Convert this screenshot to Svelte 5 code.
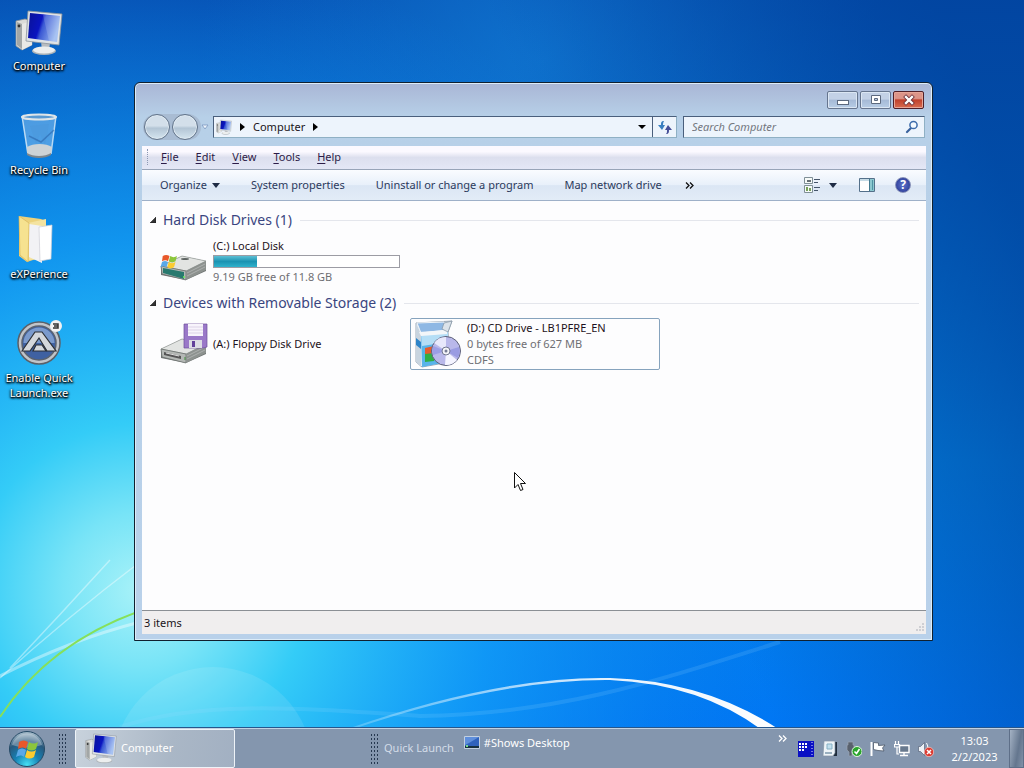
<script lang="ts">
  interface Drive {
    name: string;
    icon: 'hdd' | 'floppy' | 'cd';
    used?: number;
    lines: string[];
    selected?: boolean;
  }

  interface Group {
    title: string;
    drives: Drive[];
  }

  const shortcuts = [
    { icon: 'computer', label: 'Computer' },
    { icon: 'bin', label: 'Recycle Bin' },
    { icon: 'folder', label: 'eXPerience' },
    { icon: 'autoit', label: 'Enable Quick Launch.exe' },
  ];

  const menus = ['File', 'Edit', 'View', 'Tools', 'Help'];
  const commands = ['System properties', 'Uninstall or change a program', 'Map network drive'];

  const groups: Group[] = [
    {
      title: 'Hard Disk Drives (1)',
      drives: [
        { name: '(C:) Local Disk', icon: 'hdd', used: 23, lines: ['9.19 GB free of 11.8 GB'] },
      ],
    },
    {
      title: 'Devices with Removable Storage (2)',
      drives: [
        { name: '(A:) Floppy Disk Drive', icon: 'floppy', lines: [] },
        {
          name: '(D:) CD Drive - LB1PFRE_EN',
          icon: 'cd',
          lines: ['0 bytes free of 627 MB', 'CDFS'],
          selected: true,
        },
      ],
    },
  ];

  let query = $state('');
  let collapsed = $state<Record<string, boolean>>({});
  let count = $derived(groups.reduce((n, g) => n + g.drives.length, 0));
</script>

{#snippet flag()}
  <path d="M1 4C4 2 7 2 10 4L8 11C6 9 3 9 0 11Z" fill="#e8582a" />
  <path d="M11 4C14 6 17 6 20 4L18 11C15 13 12 13 9 11Z" fill="#8cc63c" />
  <path d="M0 12C3 10 5 10 8 12L6 19C4 17 1 17-2 19Z" fill="#5aa8e8" />
  <path d="M9 12C12 14 15 14 18 12L16 19C13 21 10 21 7 19Z" fill="#fccb30" />
{/snippet}

{#snippet computer(size: number)}
  <svg width={size} height={size} viewBox="0 0 48 48" aria-hidden="true">
    <defs>
      <linearGradient id="screen" x1="0" y1="0" x2="1" y2="0.3">
        <stop offset="0" stop-color="#0a1296" />
        <stop offset="0.45" stop-color="#0a14c0" />
        <stop offset="0.55" stop-color="#3a58d4" />
        <stop offset="1" stop-color="#98b8f0" />
      </linearGradient>
    </defs>
    <path d="M1 13L10 11L17 13V37L7 42L1 38Z" fill="#dcdcd8" stroke="#8e9294" stroke-width="0.8" />
    <path d="M7 16L17 13V37L7 42Z" fill="#e9e9e6" />
    <path d="M2 14L7 16V41L2 37Z" fill="#a2a6a6" />
    <circle cx="4" cy="18" r="1.4" fill="#333" />
    <path d="M26 33L35 35L34 43H27Z" fill="#b8bcc0" />
    <ellipse cx="29" cy="43" rx="12" ry="4" fill="#aeb4b8" />
    <ellipse cx="29" cy="42" rx="11" ry="3.5" fill="#eceeee" />
    <path d="M13 3L47 6L44 37L11 33Z" fill="#dfe3e6" stroke="#8c949c" stroke-width="0.8" />
    <path d="M15 5L45 8L42 34L13 30Z" fill="url(#screen)" />
    <path d="M28 7L45 8L42 34L34 33Z" fill="#fff" opacity="0.15" />
  </svg>
{/snippet}

{#snippet shortcutIcon(icon: string)}
  {#if icon === 'computer'}
    {@render computer(48)}
  {:else if icon === 'bin'}
    <svg width="48" height="48" viewBox="0 0 48 48" aria-hidden="true">
      <path d="M7 4L41 4L36 42C31 46 17 46 12 42Z" fill="#8fc3f0" opacity="0.5" />
      <path d="M7 4L13 42M41 4L36 42" stroke="#d8ecfa" stroke-width="1.5" opacity="0.8" />
      <path d="M15 14L21 32L25 22L30 33L34 12Z" fill="#4b94d8" opacity="0.35" />
      <path d="M14 24L26 30L39 18" stroke="#2b66ac" stroke-width="1.5" fill="none" opacity="0.6" />
      <path d="M12 35C18 31 31 31 37 35L36 42C30 46 18 46 12 42Z" fill="#cdd3d6" />
      <path d="M12 41C18 45 30 45 36 41V43C30 47 18 47 12 43Z" fill="#7f878c" />
      <ellipse cx="24" cy="5" rx="17" ry="2.5" fill="#5a9ad2" stroke="#dfe5e8" stroke-width="2" />
    </svg>
  {:else if icon === 'folder'}
    <svg width="48" height="48" viewBox="0 0 48 48" aria-hidden="true">
      <path d="M4 0L26 3L30 5V40L12 46L4 40Z" fill="#ecd27c" />
      <path d="M13 7L31 3L31 42L14 44Z" fill="#f4e3a0" />
      <path d="M14 8L27 10V47L14 41Z" fill="#f2f2f5" />
      <path d="M24 11L37 9L36 43L25 45Z" fill="#fff" stroke="#cfcfd6" stroke-width="0.7" />
      <path d="M4 0L14 7L13 46L5 39Z" fill="#f6e290" stroke="#d8b65c" stroke-width="0.7" />
    </svg>
  {:else}
    <svg width="48" height="48" viewBox="0 0 48 48" aria-hidden="true">
      <circle cx="24" cy="23" r="21" fill="#c0c4c9" stroke="#5b6068" stroke-width="1.5" />
      <circle cx="24" cy="23" r="17" fill="#3f61a2" stroke="#5a6270" stroke-width="1.5" />
      <path d="M8.500 23A15.500 15.500 0 0 1 39.500 23Z" fill="#7b9acc" />
      <path d="M7 31L20 12H27L41 31H32L24 18L15 31Z" fill="#d4d7db" stroke="#2c2f35" stroke-width="1.2" />
      <path d="M21 25H27L31 31H18Z" fill="#d4d7db" stroke="#2c2f35" stroke-width="1.2" />
      <circle cx="41" cy="6" r="6" fill="#f0f1f2" />
      <path d="M38 4H43V8H38M39 6H43" fill="none" stroke="#333" stroke-width="1.5" />
    </svg>
  {/if}
{/snippet}

{#snippet driveIcon(icon: string)}
  <svg width="48" height="48" viewBox="0 0 48 48" aria-hidden="true">
    {#if icon === 'cd'}
      <path d="M2 3L38 1L34 12L36 42L8 47L2 42Z" fill="#e8edf2" stroke="#8796a6" stroke-width="0.8" />
      <path d="M7 14L34 12V42L8 47Z" fill="#58b4ea" />
      <path d="M7 14L34 12V22L8 26Z" fill="#b5def6" />
      <path d="M2 3L7 14V47L2 42Z" fill="#c8d4df" />
      <path d="M2 18L7 22V29L2 25Z" fill="#2c83c8" />
      <path d="M3 3L30 2L33 10L7 13Z" fill="#8fb8e4" stroke="#eef3f8" />
      <path d="M5 12L33 10V14L7 16Z" fill="#f3f6f9" />
      <path d="M30 3L38 1L34 12L28 9Z" fill="#dce3ea" stroke="#8393a3" stroke-width="0.7" />
      <path d="M11 28L20 26V34L11 35Z" fill="#e55b2d" />
      <path d="M11 34L20 33V41L11 42Z" fill="#2fae44" />
      <circle cx="32" cy="31" r="14.5" fill="#b9b8ea" stroke="#5c6078" />
      <path d="M32 31L20 23A14 14 0 0 1 32 17Z" fill="#e8e8fb" />
      <path d="M32 31L43 40A14 14 0 0 1 31 45Z" fill="#f4f4ff" />
      <path d="M32 31L45 27A14 14 0 0 1 44 38Z" fill="#9a9ce2" />
      <path d="M32 31L19 35A14 14 0 0 1 19 26Z" fill="#9c9ee6" />
      <circle cx="32" cy="31" r="4" fill="#f4f4f8" stroke="#727790" />
      <circle cx="32" cy="31" r="1.5" fill="#777d96" />
    {:else}
      <path d="M1 29L22 19L46 24V34L26 43L1 38Z" fill="#6f7372" />
      <path d="M1 29L22 19L46 24L26 34Z" fill="#e2e4e2" stroke="#9a9f9c" stroke-width="0.7" />
      <path d="M1 29L26 34V43L2 37Z" fill="#b4b8b5" stroke="#666b69" stroke-width="0.7" />
      <path d="M26 34L46 24V33L26 43Z" fill="#8d928f" />
      <path d="M27 36L45 27M27 39L45 30" stroke="#b4b8b5" stroke-width="0.8" />
      {#if icon === 'hdd'}
        <path d="M3 31L24 35V42L3 36Z" fill="#28796e" />
        <ellipse cx="25" cy="22" rx="4" ry="1" fill="#5e6462" />
        <g transform="translate(2 16) scale(.75)">{@render flag()}</g>
        <circle cx="24" cy="40" r="1" fill="#70ef62" />
      {:else}
        <path d="M4 32L21 36V39L4 35Z" fill="#555" />
        <path d="M6 33L19 36" stroke="#ddd" />
        <path d="M24 4H47V27L43 28H24Z" fill="#9a78c8" stroke="#6d4f9c" stroke-width="0.7" />
        <path d="M28 4H43V16H28Z" fill="#f8f4fc" />
        <path d="M28 7H43M28 10H43M28 13H43" stroke="#c9bcd8" stroke-width="0.6" />
        <path d="M29 20H42V28H29Z" fill="#dcdce4" />
        <path d="M32 21H35V27H32Z" fill="#62409a" />
        <path d="M25 37V40" stroke="#3f8f3a" />
      {/if}
    {/if}
  </svg>
{/snippet}

<div class="desktop">
  <svg class="wallpaper" viewBox="0 0 1024 768" preserveAspectRatio="none" aria-hidden="true">
    <defs>
      <linearGradient id="sky" x1="0" y1="0" x2="0" y2="1">
        <stop offset="0" stop-color="#0650b2" />
        <stop offset="0.3" stop-color="#056fce" />
        <stop offset="0.6" stop-color="#0487e6" />
        <stop offset="1" stop-color="#0074f6" />
      </linearGradient>
      <radialGradient id="glow" cx="140" cy="590" r="640" gradientUnits="userSpaceOnUse">
        <stop offset="0" stop-color="#a8f2f8" />
        <stop offset="0.12" stop-color="#78e4f7" />
        <stop offset="0.26" stop-color="#34ccf7" />
        <stop offset="0.55" stop-color="#14a0f8" stop-opacity="0.75" />
        <stop offset="1" stop-color="#0c7ee8" stop-opacity="0" />
      </radialGradient>
      <radialGradient id="top" cx="540" cy="60" r="340" gradientUnits="userSpaceOnUse">
        <stop offset="0" stop-color="#127cd6" stop-opacity="0.7" />
        <stop offset="1" stop-color="#127cd6" stop-opacity="0" />
      </radialGradient>
      <linearGradient id="shade" x1="0" y1="0.6" x2="1" y2="0.3">
        <stop offset="0.6" stop-color="#00429c" stop-opacity="0" />
        <stop offset="1" stop-color="#00429c" stop-opacity="0.75" />
      </linearGradient>
      <linearGradient id="arc" x1="0" y1="0" x2="1" y2="0">
        <stop offset="0" stop-color="#fff" stop-opacity="0.2" />
        <stop offset="0.6" stop-color="#fff" stop-opacity="0.9" />
        <stop offset="1" stop-color="#fff" />
      </linearGradient>
    </defs>
    <rect width="1024" height="768" fill="url(#sky)" />
    <rect width="1024" height="768" fill="url(#top)" />
    <rect width="1024" height="768" fill="url(#shade)" />
    <rect width="1024" height="768" fill="url(#glow)" />
    <circle cx="213" cy="767" r="100" fill="#fff" opacity="0.1" />
    <path d="M0 678Q70 615 140 562M10 668Q60 615 110 560" stroke="#fff" stroke-width="1.5" fill="none" opacity="0.4" />
    <path d="M0 676Q70 640 140 622" stroke="#fff" stroke-width="3" fill="none" opacity="0.4" />
    <path d="M0 717Q48 644 140 611" stroke="#86e05a" stroke-width="2" fill="none" />
    <path d="M120 727C200 700 300 708 420 716C560 714 660 680 780 642" stroke="#9fdcff" stroke-width="4" fill="none" opacity="0.15" />
    <path d="M350 728Q500 676 610 678Q706 681 780 730L762 730Q700 684 610 680Q500 679 350 730Z" fill="url(#arc)" />
  </svg>

  <nav class="shortcuts" aria-label="Desktop">
    {#each shortcuts as s (s.label)}
      <button type="button" class="shortcut">
        {@render shortcutIcon(s.icon)}
        <span>{s.label}</span>
      </button>
    {/each}
  </nav>

  <main class="window">
    <header class="titlebar">
      <button type="button" class="caption" aria-label="Minimize">
        <svg width="14" height="12" viewBox="0 0 14 12"><rect x="1.500" y="6.500" width="11" height="4" fill="#fff" stroke="#5c697e" /></svg>
      </button>
      <button type="button" class="caption" aria-label="Maximize">
        <svg width="14" height="12" viewBox="0 0 14 12"><path d="M2.500 1.500H11.500V9.500H2.500ZM5.500 4.500V6.500H8.500V4.500Z" fill="#fff" fill-rule="evenodd" stroke="#5c697e" /></svg>
      </button>
      <button type="button" class="caption close" aria-label="Close">
        <svg width="14" height="12" viewBox="0 0 14 12">
          <path d="M4 3L10 9M10 3L4 9" stroke="#6b3038" stroke-width="4" stroke-linecap="square" />
          <path d="M4 3L10 9M10 3L4 9" stroke="#fff" stroke-width="2.4" stroke-linecap="square" />
        </svg>
      </button>
    </header>

    <div class="navbar">
      <div class="travel">
        <button type="button" class="round" aria-label="Back"></button>
        <button type="button" class="round" aria-label="Forward"></button>
      </div>
      <svg class="recent" width="8" height="6" viewBox="0 0 8 6" aria-hidden="true"><path d="M1 1H7L4 5Z" fill="#eef5fc" stroke="#7c98c0" stroke-width="0.8" /></svg>
      <div class="address">
        {@render computer(16)}
        <svg width="5" height="8" viewBox="0 0 5 8" aria-hidden="true"><path d="M0 0L5 4L0 8Z" /></svg>
        <button type="button" class="crumb">Computer</button>
        <svg width="5" height="8" viewBox="0 0 5 8" aria-hidden="true"><path d="M0 0L5 4L0 8Z" /></svg>
        <button type="button" class="drop" aria-label="Previous locations">
          <svg width="8" height="4" viewBox="0 0 8 4"><path d="M0 0H8L4 4Z" /></svg>
        </button>
        <button type="button" class="refresh" aria-label="Refresh">
          <svg width="16" height="16" viewBox="0 0 16 16">
            <path d="M7 2C4 2 4 4 4 6H1L5 11L8 6H6C6 5 6 4 7 2Z" fill="#3a7fc0" />
            <path d="M9 15C12 15 12 13 12 11H15L11 6L8 11H10C10 13 10 14 9 15Z" fill="#464f98" />
          </svg>
        </button>
      </div>
      <label class="search">
        <input type="text" placeholder="Search Computer" aria-label="Search Computer" bind:value={query} />
        <svg width="14" height="14" viewBox="0 0 14 14" aria-hidden="true">
          <path d="M6 8L2 12" stroke="#38619c" stroke-width="2.2" stroke-linecap="round" />
          <circle cx="8.500" cy="5" r="3.600" fill="#f4faff" stroke="#3d6cab" stroke-width="1.5" />
        </svg>
      </label>
    </div>

    <div class="menubar">
      <span class="menu-grip"></span>
      {#each menus as m (m)}
        <button type="button"><u>{m[0]}</u>{m.slice(1)}</button>
      {/each}
    </div>

    <div class="toolbar">
      <button type="button">
        Organize
        <svg width="8" height="5" viewBox="0 0 8 5" aria-hidden="true"><path d="M0 0H8L4 5Z" fill="#1e2b44" /></svg>
      </button>
      {#each commands as c (c)}
        <button type="button">{c}</button>
      {/each}
      <button type="button" class="more" aria-label="More commands">
        <svg width="9" height="7" viewBox="0 0 9 7"><path d="M1 0.500L4 3.500L1 6.500M5 0.500L8 3.500L5 6.500" fill="none" stroke="#111" stroke-width="1.300" /></svg>
      </button>
      <div class="tools">
        <button type="button" aria-label="Change your view">
          <svg width="16" height="16" viewBox="0 0 16 16">
            <path d="M0.500 0.500H8.500V6.500H0.500ZM0.500 8.500H8.500V15.500H0.500Z" fill="#f6faf8" stroke="#7f8f96" />
            <path d="M3 4H7" stroke="#34414a" stroke-width="1.5" />
            <path d="M2 10H4V14H2ZM5 11H7V14H5Z" fill="#76a05a" />
            <path d="M10 2.500H16M10 5.500H14M10 10.500H16M10 13.500H14" stroke="#45556a" />
          </svg>
        </button>
        <button type="button" class="views" aria-label="More options">
          <svg width="8" height="5" viewBox="0 0 8 5"><path d="M0 0H8L4 5Z" fill="#1e2b44" /></svg>
        </button>
        <button type="button" aria-label="Show the preview pane">
          <svg width="16" height="14" viewBox="0 0 16 14">
            <path d="M0.500 0.500H15.500V13.500H0.500Z" fill="#fff" stroke="#54708a" />
            <path d="M1 1H15V3H1Z" fill="#c6dbe6" />
            <path d="M11 1H15V13H11Z" fill="#8cc8d0" />
            <path d="M10.500 1V13" stroke="#42798f" />
            <path d="M13.500 2V12" stroke="#4f94a4" />
          </svg>
        </button>
        <button type="button" class="help" aria-label="Get help">?</button>
      </div>
    </div>

    <div class="files">
      {#each groups as g (g.title)}
        <section>
          <h2>
            <button type="button" aria-expanded={!collapsed[g.title]} onclick={() => (collapsed[g.title] = !collapsed[g.title])}>
              <svg width="6" height="6" viewBox="0 0 6 6" aria-hidden="true"><path d="M6 0V6H0Z" fill="#333" stroke="#111" stroke-width="0.5" /></svg>
              {g.title}
            </button>
          </h2>
          {#if !collapsed[g.title]}
            <div class="drives">
              {#each g.drives as d (d.name)}
                <button type="button" class="drive" class:selected={d.selected}>
                  {@render driveIcon(d.icon)}
                  <span class="info">
                    <span class="name">{d.name}</span>
                    {#if d.used}
                      <span class="meter"><span class="fill" style="width: {d.used}%"></span></span>
                    {/if}
                    {#each d.lines as line (line)}
                      <span>{line}</span>
                    {/each}
                  </span>
                </button>
              {/each}
            </div>
          {/if}
        </section>
      {/each}
    </div>

    <footer class="status">
      <span>{count} items</span>
      <svg width="8" height="8" viewBox="0 0 8 8" aria-hidden="true"><path d="M6 0H8V2H6ZM3 3H5V5H3ZM6 3H8V5H6ZM0 6H2V8H0ZM3 6H5V8H3ZM6 6H8V8H6Z" fill="#cfcfd3" /></svg>
    </footer>
  </main>

  <svg class="cursor" width="13" height="20" viewBox="0 0 13 20" aria-hidden="true">
    <path d="M0.500 0.500V16L4 12.500L6.500 18.500L9 17.500L6.500 11.500H11.500Z" fill="#fff" stroke="#111" />
  </svg>

  <footer class="taskbar">
    <button type="button" class="start" aria-label="Start">
      <svg width="38" height="38" viewBox="0 0 38 38">
        <defs>
          <radialGradient id="orb" cx="0.5" cy="0.95" r="0.9">
            <stop offset="0" stop-color="#46e0f4" />
            <stop offset="0.4" stop-color="#1681b4" />
            <stop offset="0.75" stop-color="#28587c" />
            <stop offset="1" stop-color="#9cb4c4" />
          </radialGradient>
        </defs>
        <circle cx="19" cy="19" r="17.500" fill="url(#orb)" stroke="#254a66" />
        <path d="M4 15A15.500 15.500 0 0 1 34 15Q19 20 4 15Z" fill="#fff" opacity="0.3" />
        <g transform="translate(10 8)">{@render flag()}</g>
      </svg>
    </button>
    <span class="grip"></span>
    <button type="button" class="task">
      {@render computer(32)}
      Computer
    </button>
    <span class="grip second"></span>
    <span class="band">Quick Launch</span>
    <button type="button" class="show">
      <svg width="16" height="13" viewBox="0 0 16 13" aria-hidden="true">
        <path d="M0.500 0.500H15.500V12.500H0.500Z" fill="#2f62bc" stroke="#c2d0e0" />
        <path d="M1 1H15L5 7L1 9Z" fill="#5f8fdc" />
        <path d="M1 10H15V12H1Z" fill="#17303e" />
        <path d="M2 9H4V11H2Z" fill="#72d890" />
      </svg>
      #Shows Desktop
    </button>
    <button type="button" class="chevron" aria-label="More toolbars">
      <svg width="9" height="7" viewBox="0 0 9 7"><path d="M1 0.500L4 3.500L1 6.500M5 0.500L8 3.500L5 6.500" fill="none" stroke="#fff" stroke-width="1.300" /></svg>
    </button>
    <div class="tray">
      <svg width="16" height="16" viewBox="0 0 16 16" role="img" aria-label="Processor usage">
        <rect width="16" height="16" fill="#0a10c4" />
        <path d="M1 3H10M1 6H10M1 9H7" stroke="#fff" stroke-width="2" stroke-dasharray="2 1" />
        <path d="M14 1V15" stroke="#dfe4ff" stroke-dasharray="1 2" />
      </svg>
      <svg width="16" height="16" viewBox="0 0 16 16" role="img" aria-label="Virtual machine">
        <path d="M3 1H15V15H3Z" fill="#1f2c3c" />
        <path d="M2 0H13V12L11 15H1Z" fill="#eef4f8" stroke="#8494a4" stroke-width="0.7" />
        <path d="M5 3H10V8H5Z" fill="#c2e0ee" stroke="#86b0c4" />
        <path d="M3 12H10" stroke="#7d98ac" stroke-width="1.5" />
      </svg>
      <svg width="16" height="16" viewBox="0 0 16 16" role="img" aria-label="Safely remove hardware">
        <path d="M2 1H7V4H8V9L6 11V15H3V11L1 9V4H2Z" fill="#59616d" stroke="#9aa5b3" stroke-width="0.7" />
        <circle cx="11" cy="10.500" r="5" fill="#2aa52c" stroke="#e2f5e0" />
        <path d="M8.500 10.500L10.500 12.500L13.500 8" fill="none" stroke="#fff" stroke-width="1.600" />
      </svg>
      <svg width="16" height="16" viewBox="0 0 16 16" role="img" aria-label="Action Center">
        <path d="M1.500 1V15" stroke="#fff" stroke-width="2" />
        <path d="M3.500 1.500L8.500 2V4.500L15 4L12.500 7L14 10L8 9.500L3.500 8.500Z" fill="#fff" stroke="#4d5868" stroke-width="0.8" />
      </svg>
      <svg width="16" height="16" viewBox="0 0 16 16" role="img" aria-label="Network">
        <path d="M5.500 4.500H15V11.500H5.500Z" fill="#68798e" stroke="#fff" stroke-width="1.400" />
        <path d="M6 14.500H14M10 12V14" stroke="#fff" stroke-width="1.400" />
        <path d="M1.500 0V3M4.500 0V3M0.500 3.500H5.500V6H0.500ZM3 6V13H5" fill="none" stroke="#fff" stroke-width="1.200" />
      </svg>
      <svg width="16" height="16" viewBox="0 0 16 16" role="img" aria-label="Volume">
        <path d="M0.500 5.500H2.500L6.500 1.500V14.500L2.500 10.500H0.500Z" fill="#eef2f6" stroke="#56637a" stroke-width="0.7" />
        <path d="M8.500 2Q10.500 5 9.500 8" fill="none" stroke="#fff" />
        <circle cx="11" cy="11" r="4.700" fill="#dc3a30" stroke="#f6d4d0" stroke-width="0.7" />
        <path d="M9 9L13 13M13 9L9 13" stroke="#fff" stroke-width="1.500" />
      </svg>
    </div>
    <time class="clock" datetime="2023-02-02T13:03"><span>13:03</span><span>2/2/2023</span></time>
    <button type="button" class="peek" aria-label="Show desktop"></button>
  </footer>
</div>

<style>
  :global(body) {
    margin: 0;
  }

  .desktop {
    position: relative;
    display: flex;
    flex-direction: column;
    min-height: 100vh;
    overflow: hidden;
    font-family: 'Noto Sans', 'Open Sans', sans-serif;
    font-size: 11px;
    line-height: 16px;
    color: #1a1420;
  }

  svg {
    display: block;
    flex-shrink: 0;
  }

  button {
    padding: 0;
    border: none;
    background: none;
    font: inherit;
    color: inherit;
    white-space: nowrap;
  }

  .wallpaper {
    position: absolute;
    inset: 0;
    width: 100%;
    height: 100%;
  }

  .shortcuts {
    position: relative;
    display: flex;
    flex: 1;
    flex-direction: column;
    align-items: flex-start;
    padding: 8px 0;
  }

  .shortcut {
    display: flex;
    flex-direction: column;
    align-items: center;
    gap: 2px;
    width: 78px;
    min-height: 104px;
    line-height: 15px;
    color: #fff;
    text-shadow: 0 1px 2px #000, 1px 1px 2px #000, 0 1px 3px #000;
  }

  .shortcut span {
    white-space: normal;
  }

  .window {
    position: absolute;
    inset: 82px 91px 127px 134px;
    box-sizing: border-box;
    display: flex;
    flex-direction: column;
    padding: 0 6px 6px 7px;
    background: linear-gradient(#a9b6d5, #b7d0e8 34px, #b9d1ea);
    border: 1px solid #10202f;
    border-radius: 6px 6px 0 0;
    box-shadow: inset 0 0 0 1px #dcecf8;
  }

  .titlebar {
    display: flex;
    justify-content: flex-end;
    gap: 2px;
    padding: 8px 2px 7px 0;
  }

  .caption {
    display: flex;
    align-items: center;
    justify-content: center;
    box-sizing: border-box;
    width: 31px;
    height: 18px;
    background: linear-gradient(#c3d1e6 45%, #a5b9d6 50%, #b8cde6);
    border: 1px solid #66758e;
    border-radius: 2px;
    box-shadow: inset 0 0 0 1px #dbe6f3;
  }

  .close {
    background: linear-gradient(#dc9488 40%, #c0412c 50%, #d86c50);
    border-color: #4f1f28;
    box-shadow: inset 0 0 0 1px #e6a698;
  }

  .navbar {
    display: flex;
    align-items: center;
    height: 22px;
    padding: 0 1px 8px;
  }

  .travel {
    display: flex;
    gap: 2px;
    padding: 0 3px 0 1px;
    border-radius: 13px;
    background: #a9bcd3;
  }

  .round {
    box-sizing: border-box;
    width: 26px;
    height: 26px;
    border: 1px solid #62748a;
    border-radius: 50%;
    background: linear-gradient(#d3dfea 45%, #b3c5d5 55%, #d5e5ef);
    box-shadow: inset 0 0 0 1px #e0eaf2;
  }

  .recent {
    margin-right: 4px;
  }

  .address,
  .search {
    display: flex;
    align-items: center;
    box-sizing: border-box;
    height: 22px;
    background: #edf4fc;
    border: 1px solid #8fb0c4;
    border-top-color: #4a5f7c;
    border-left-color: #4a5f7c;
  }

  .address {
    flex: 1;
    gap: 8px;
    padding-left: 2px;
  }

  .drop {
    display: flex;
    margin-left: auto;
    padding: 8px 0;
  }

  .refresh {
    display: flex;
    align-items: center;
    justify-content: center;
    width: 24px;
    height: 20px;
    margin-left: -2px;
    border-left: 1px solid #4a5f7c;
  }

  .search {
    flex: 0 1 242px;
    margin-left: 6px;
    padding-right: 5px;
  }

  .search input {
    flex: 1;
    min-width: 0;
    padding: 0 8px;
    border: none;
    outline: none;
    background: transparent;
    font: inherit;
    font-style: italic;
  }

  .search input::placeholder {
    color: #73777f;
  }

  .menubar {
    display: flex;
    align-items: center;
    gap: 17px;
    height: 24px;
    box-sizing: border-box;
    padding: 0 5px 2px;
    background: linear-gradient(#fbf9ff 25%, #dcdfee 50%, #e4e7f6);
    border-bottom: 1px solid #98a4b8;
    color: #2c1c48;
  }

  .menu-grip {
    width: 1px;
    height: 16px;
    margin-right: -5px;
    border-left: 1px dotted #8c98b4;
  }

  .menubar u {
    text-underline-offset: 2px;
  }

  .toolbar {
    display: flex;
    align-items: center;
    gap: 31px;
    height: 30px;
    padding: 0 15px 0 18px;
    background: linear-gradient(#fafcff, #e8f0fa 50%, #dbe6f4 52%, #e2ecf7);
    border-bottom: 1px solid #9eb0c8;
    color: #2c3a5c;
  }

  .toolbar button {
    display: flex;
    align-items: center;
    gap: 5px;
  }

  .toolbar .more {
    margin-left: -8px;
  }

  .tools {
    display: flex;
    align-items: center;
    gap: 9px;
    margin-left: auto;
  }

  .tools .views {
    margin-right: 13px;
  }

  .toolbar .help {
    justify-content: center;
    box-sizing: border-box;
    width: 16px;
    height: 16px;
    margin-left: 11px;
    border: 1px solid #8690b8;
    border-radius: 50%;
    background: radial-gradient(#6176cc, #1f2f8c);
    color: #fff;
    font-size: 12px;
    font-weight: 700;
  }

  .files {
    flex: 1;
    padding: 9px 7px 0 8px;
    background: #fdfdfe;
    border-bottom: 1px solid #8b8f94;
  }

  section {
    margin-bottom: 6px;
  }

  h2 {
    display: flex;
    align-items: center;
    gap: 8px;
    margin: 0 0 5px;
    font-size: 14px;
    font-weight: 400;
    line-height: 20px;
    color: #3a4580;
  }

  h2::after {
    content: '';
    flex: 1;
    border-top: 1px solid #e4e6ec;
  }

  h2 button {
    display: flex;
    align-items: center;
    gap: 7px;
  }

  .drives {
    display: grid;
    grid-template-columns: repeat(auto-fill, 250px);
    gap: 4px;
    padding-left: 6px;
  }

  .drive {
    display: flex;
    align-items: center;
    gap: 5px;
    box-sizing: border-box;
    height: 52px;
    padding: 0 5px 0 3px;
    border: 1px solid transparent;
    border-radius: 2px;
    text-align: left;
    color: #6f6f74;
  }

  .drive.selected {
    border-color: #86a3bd;
  }

  .info {
    display: flex;
    flex: 1;
    flex-direction: column;
  }

  .name {
    color: #1e1220;
  }

  .meter {
    box-sizing: border-box;
    height: 13px;
    margin: 1px 0;
    border: 1px solid #9c9ca4;
    background: #fff;
  }

  .fill {
    display: block;
    height: 100%;
    background: linear-gradient(#5cbfd4, #1b93b2 50%, #2fb2cc);
  }

  .status {
    display: flex;
    align-items: flex-end;
    justify-content: space-between;
    padding: 4px 2px 3px;
    background: #f0eeee;
  }

  .cursor {
    position: absolute;
    top: 472px;
    left: 514px;
  }

  .taskbar {
    position: relative;
    display: flex;
    align-items: center;
    box-sizing: border-box;
    height: 40px;
    background: #8496ae;
    border-top: 1px solid #c2d2e2;
    box-shadow: 0 -1px 0 #26568c;
    color: #fff;
  }

  .start {
    padding: 0 12px 0 8px;
  }

  .grip {
    width: 9px;
    height: 32px;
    background: radial-gradient(#263850 1px, transparent 1px) 0 0 / 3px 4px;
  }

  .task {
    display: flex;
    align-items: center;
    gap: 4px;
    box-sizing: border-box;
    width: 160px;
    height: 39px;
    margin-left: 8px;
    padding: 0 8px 2px 9px;
    border: 1px solid #eef3f8;
    border-radius: 2px;
    background: linear-gradient(100deg, #c8d2dc, #aab7c6 60%, #a2b0c2);
  }

  .second {
    margin-left: 135px;
  }

  .band {
    padding: 0 10px 2px 5px;
    color: #d3dce8;
  }

  .show {
    display: flex;
    align-items: center;
    gap: 4px;
    padding-bottom: 12px;
  }

  .chevron {
    margin-left: auto;
    padding: 0 11px 20px 0;
  }

  .tray {
    display: flex;
    gap: 8px;
  }

  .clock {
    display: flex;
    flex-direction: column;
    width: 75px;
    padding-left: 6px;
    box-sizing: border-box;
    text-align: center;
  }

  .peek {
    box-sizing: border-box;
    width: 15px;
    height: 39px;
    border: 1px solid #5e6f88;
    background: linear-gradient(100deg, #a4b2c4, #64768e 60%, #8292a8);
  }
</style>
